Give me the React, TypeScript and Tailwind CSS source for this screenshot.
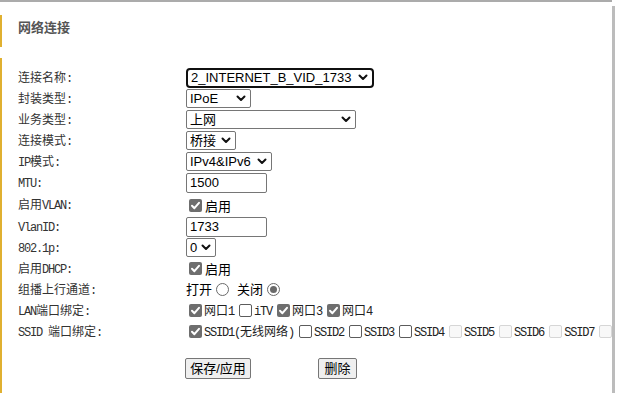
import React from "react";

const mono = "font-['Liberation_Mono','Noto_Sans_CJK_SC',monospace]";
const sans = "font-['Liberation_Sans','Noto_Sans_CJK_SC',sans-serif]";

// Latin runs narrower, like the SimSun half-width glyphs of the original
function Mixed({ text }: { text: string }) {
  const parts = text.match(/[\x00-\x7F]+|[^\x00-\x7F]+/g) || [];
  return (
    <>
      {parts.map((p, i) =>
        /^[\x00-\x7F]+$/.test(p) ? (
          <span key={i} className="text-[12px] tracking-[-1.2px]">{p}</span>
        ) : (
          <span key={i} className="text-[12px]">{p}</span>
        )
      )}
    </>
  );
}

function Chevron() {
  return (
    <svg width="10" height="7" viewBox="0 0 10 7" className="shrink-0">
      <path d="M1.5 1.5 L5 5 L8.5 1.5" fill="none" stroke="#111" strokeWidth="2" strokeLinecap="round" strokeLinejoin="round" />
    </svg>
  );
}

function Select({ value, w, focused }: { value: string; w: string; focused?: boolean }) {
  return (
    <div
      className={`${w} h-[19px] flex items-center justify-between pl-[3px] pr-[4px] bg-white text-[13px] text-black ${sans} ${
        focused ? "border-2 border-[#101010] rounded-[4px] h-[20px]" : "border border-[#767676] rounded-[2px]"
      }`}
    >
      <span className="whitespace-nowrap leading-none">{value}</span>
      <Chevron />
    </div>
  );
}

function TextInput({ value }: { value: string }) {
  return (
    <div className={`w-[81px] h-[20px] flex items-center px-[3px] border border-[#767676] rounded-[2px] text-[13px] text-black ${sans}`}>
      {value}
    </div>
  );
}

function Check({ state }: { state: "on" | "off" | "disabled" }) {
  if (state === "on") {
    return (
      <span className="inline-flex w-[13px] h-[13px] rounded-[2px] bg-[#6e6e6e] items-center justify-center ml-[3px] mr-[2px] shrink-0">
        <svg width="11" height="11" viewBox="0 0 11 11">
          <path d="M2 5.8 L4.4 8.2 L9 2.8" fill="none" stroke="#fff" strokeWidth="2" strokeLinecap="round" strokeLinejoin="round" />
        </svg>
      </span>
    );
  }
  return (
    <span
      className={`inline-block w-[13px] h-[13px] rounded-[2px] border ml-[3px] mr-[2px] shrink-0 ${
        state === "off" ? "border-[#5c5c5c] bg-white" : "border-[#d6d6d6] bg-[#f8f8f8]"
      }`}
    />
  );
}

function Radio({ on }: { on?: boolean }) {
  return (
    <span className="inline-flex w-[13px] h-[13px] rounded-full border border-[#6a6a6a] items-center justify-center mx-[4px] shrink-0">
      {on && <span className="w-[7px] h-[7px] rounded-full bg-[#6a6a6a]" />}
    </span>
  );
}

function Row({ label, h = "h-[21px]", children }: { label: string; h?: string; children: React.ReactNode }) {
  return (
    <div className={`flex items-center ${h}`}>
      <div className={`w-[168px] shrink-0 text-[#333] whitespace-nowrap ${mono}`}>
        <Mixed text={label} />
      </div>
      <div className="flex items-center whitespace-nowrap">{children}</div>
    </div>
  );
}

export default function App() {
  const lan: [string, "on" | "off"][] = [
    ["网口1", "on"],
    ["iTV", "off"],
    ["网口3", "on"],
    ["网口4", "on"],
  ];
  const ssid: [string, "on" | "off" | "disabled"][] = [
    ["SSID1(无线网络)", "on"],
    ["SSID2", "off"],
    ["SSID3", "off"],
    ["SSID4", "off"],
    ["SSID5", "disabled"],
    ["SSID6", "disabled"],
    ["SSID7", "disabled"],
    ["SSID8", "disabled"],
  ];
  return (
    <div className="w-[617px] h-[393px] bg-white overflow-hidden flex flex-col">
      <div className="h-[2px] w-[612px] bg-[#ababab] shrink-0" />
      <div className="flex flex-1 min-h-0">
        <div className="flex-1 min-w-0 overflow-hidden">
          <div className="mt-[13px] h-[32px] border-l-2 border-[#e0b030] pl-[16px] pt-[3px]">
            <div className="text-[13px] font-bold text-[#555] font-['Noto_Sans_CJK_SC',sans-serif] leading-[18px]">网络连接</div>
          </div>
          <div className="mt-[11px] border-l-2 border-[#e0b030] pl-[16px] pt-[9px] pb-[40px]">
            <Row label="连接名称:">
              <Select value="2_INTERNET_B_VID_1733" w="w-[188px]" focused />
            </Row>
            <Row label="封装类型:">
              <Select value="IPoE" w="w-[65px]" />
            </Row>
            <Row label="业务类型:">
              <Select value="上网" w="w-[170px]" />
            </Row>
            <Row label="连接模式:">
              <Select value="桥接" w="w-[50px]" />
            </Row>
            <Row label="IP模式:">
              <Select value="IPv4&IPv6" w="w-[86px]" />
            </Row>
            <Row label="MTU:" h="h-[22px]">
              <TextInput value="1500" />
            </Row>
            <Row label="启用VLAN:" h="h-[22px]">
              <Check state="on" />
              <span className={`text-[13px] text-black ml-[1px] ${sans} mt-[3px]`}>启用</span>
            </Row>
            <Row label="VlanID:">
              <TextInput value="1733" />
            </Row>
            <Row label="802.1p:">
              <Select value="0" w="w-[30px]" />
            </Row>
            <Row label="启用DHCP:">
              <Check state="on" />
              <span className={`text-[13px] text-black ml-[1px] ${sans} mt-[3px]`}>启用</span>
            </Row>
            <Row label="组播上行通道:">
              <span className={`text-[13px] text-black ${sans}`}>打开</span>
              <Radio />
              <span className={`text-[13px] text-black ml-[4px] ${sans}`}>关闭</span>
              <Radio on />
            </Row>
            <Row label="LAN端口绑定:">
              {lan.map(([t, s]) => (
                <span key={t} className="flex items-center">
                  <Check state={s} />
                  <span className={`text-[#222] mr-[2px] ${mono}`}>
                    <Mixed text={t} />
                  </span>
                </span>
              ))}
            </Row>
            <Row label="SSID 端口绑定:">
              {ssid.map(([t, s]) => (
                <span key={t} className="flex items-center">
                  <Check state={s} />
                  <span className={`text-[#222] mr-[2px] ${mono}`}>
                    <Mixed text={t} />
                  </span>
                </span>
              ))}
            </Row>
            <div className="flex items-center mt-[16px] pl-[167px]">
              <button className={`h-[21px] w-[66px] border border-[#767676] bg-[#efefef] rounded-[2px] text-[13px] text-black ${sans}`}>
                保存/应用
              </button>
              <button className={`ml-[67px] h-[21px] w-[39px] border border-[#767676] bg-[#efefef] rounded-[2px] text-[13px] text-black ${sans}`}>
                删除
              </button>
            </div>
          </div>
        </div>
        <div className="w-[5px] shrink-0 flex flex-col">
          <div className="h-[4px]" />
          <div className="flex-1 w-[3px] bg-[#bcbcbc]" />
        </div>
      </div>
    </div>
  );
}
